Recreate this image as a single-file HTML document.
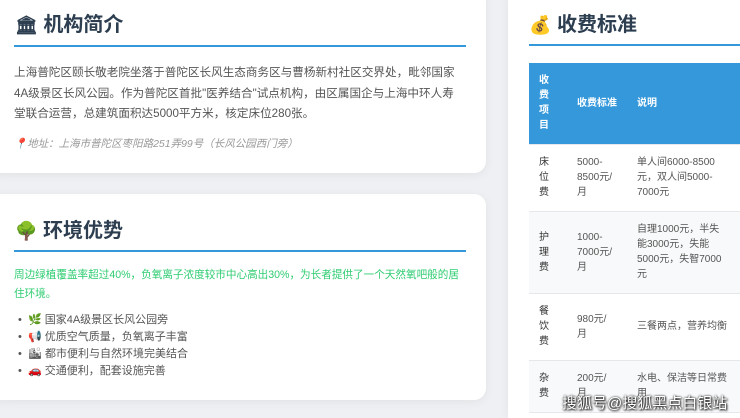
<!DOCTYPE html>
<html><head><meta charset="utf-8"><style>
*{margin:0;padding:0;box-sizing:border-box}
html,body{width:740px;height:418px;overflow:hidden}
body{background:#eef0f3;font-family:"Liberation Sans","Noto Sans CJK SC",sans-serif;position:relative}
.card{position:absolute;background:#fff;border-radius:12px;box-shadow:0 2px 10px rgba(0,0,0,.06)}
h2{position:absolute;font-size:20px;font-weight:bold;color:#2c3e50;line-height:24px;white-space:nowrap}
.line{position:absolute;height:2px;background:#3498db}
.p{position:absolute;font-size:11.6px;color:#555;line-height:20.5px;white-space:nowrap}
table{position:absolute;border-collapse:collapse;font-size:10px;color:#555}
td,th{vertical-align:middle;text-align:left;line-height:15px;padding:0}
th{background:#3498db;color:#fff;font-weight:bold}
tr{border-bottom:1px solid #e5e7ea}
</style></head><body>
<div class="card" style="left:-12px;top:-12px;width:498px;height:185px"></div>
<div class="card" style="left:-12px;top:194px;width:498px;height:206px"></div>
<div class="card" style="left:508px;top:-12px;width:232px;height:430px;border-radius:12px 0 0 0"></div>

<h2 style="left:15px;top:13px"><span style="font-size:18px">🏛</span> 机构简介</h2>
<div class="line" style="left:14px;top:45px;width:452px"></div>
<div class="p" style="left:14px;top:63px">上海普陀区颐长敬老院坐落于普陀区长风生态商务区与曹杨新村社区交界处，毗邻国家<br>4A级景区长风公园。作为普陀区首批"医养结合"试点机构，由区属国企与上海中环人寿<br>堂联合运营，总建筑面积达5000平方米，核定床位280张。</div>
<div class="p" style="left:14px;top:135px;font-size:10.5px;font-style:italic;color:#999;line-height:18px">📍地址：上海市普陀区枣阳路251弄99号（长风公园西门旁）</div>

<h2 style="left:15px;top:219px"><span style="font-size:18px">🌳</span> 环境优势</h2>
<div class="line" style="left:14px;top:250px;width:452px"></div>
<div class="p" style="left:14px;top:266px;color:#2ecc71;font-size:10.6px;line-height:19px">周边绿植覆盖率超过40%，负氧离子浓度较市中心高出30%，为长者提供了一个天然氧吧般的居<br>住环境。</div>
<div class="p" style="left:18px;top:312px;font-size:11px;line-height:17px">•&nbsp;&nbsp;🌿 国家4A级景区长风公园旁<br>•&nbsp;&nbsp;📢 优质空气质量，负氧离子丰富<br>•&nbsp;&nbsp;🏙 都市便利与自然环境完美结合<br>•&nbsp;&nbsp;🚗 交通便利，配套设施完善</div>

<h2 style="left:529px;top:13px"><span style="font-size:18px">💰</span> 收费标准</h2>
<div class="line" style="left:529px;top:44px;width:211px"></div>
<table style="left:529px;top:63px;width:211px">
<tr style="height:81px"><th style="width:38px;padding-left:10px">收<br>费<br>项<br>目</th><th style="width:60px;padding-left:10px">收费标准</th><th style="padding-left:10px">说明</th></tr>
<tr style="height:67px"><td style="padding-left:10px;color:#333">床<br>位<br>费</td><td style="padding-left:10px">5000-<br>8500元/<br>月</td><td style="padding-left:10px">单人间6000-8500<br>元，双人间5000-<br>7000元</td></tr>
<tr style="height:82px;background:#f8f9fa"><td style="padding-left:10px;color:#333">护<br>理<br>费</td><td style="padding-left:10px">1000-<br>7000元/<br>月</td><td style="padding-left:10px">自理1000元，半失<br>能3000元，失能<br>5000元，失智7000<br>元</td></tr>
<tr style="height:67px"><td style="padding-left:10px;color:#333">餐<br>饮<br>费</td><td style="padding-left:10px">980元/<br>月</td><td style="padding-left:10px">三餐两点，营养均衡</td></tr>
<tr style="height:52px;background:#f8f9fa"><td style="padding-left:10px;color:#333">杂<br>费</td><td style="padding-left:10px">200元/<br>月</td><td style="padding-left:10px">水电、保洁等日常费<br>用</td></tr>
</table>
<div style="position:absolute;left:562px;top:392px;font-size:15px;color:#fff;text-shadow:0 0 2px #000,1px 1px 2px #000;white-space:nowrap">搜狐号@搜狐黑点白银站</div>
</body></html>
